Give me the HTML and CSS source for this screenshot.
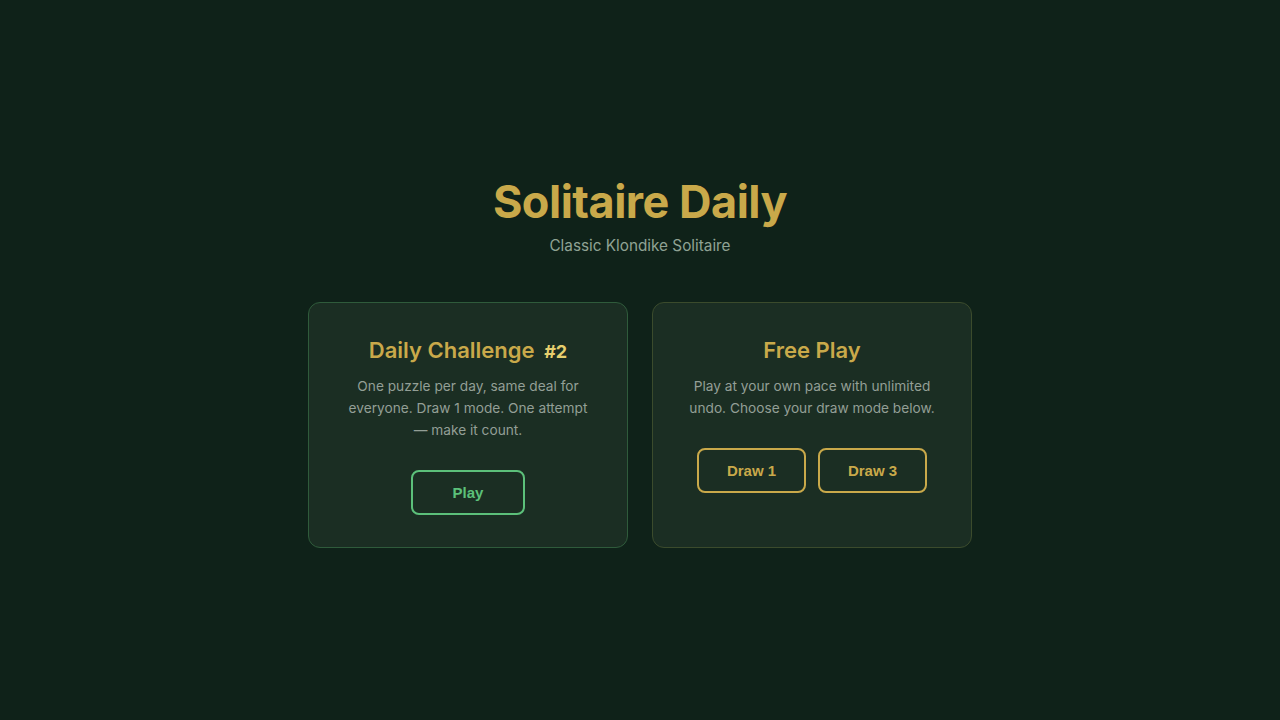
FILE: index.html
```html
<!DOCTYPE html>
<html>
<head>
    <meta charset="utf-8">
    <title>Solitaire Daily</title>
    <link rel="stylesheet" href="styles.css">
</head>
<body>
<main class="menu">
    <header class="title-block">
        <h1 class="title">Solitaire Daily</h1>
        <p class="subtitle">Classic Klondike Solitaire</p>
    </header>

    <section class="modes">
        <div class="card card-daily">
            <h2 class="card-title">Daily Challenge <span class="deal-no">#2</span></h2>
            <p class="card-text">One puzzle per day, same deal for everyone. Draw 1 mode. One attempt — make it count.</p>
            <div class="actions">
                <button class="btn btn-green btn-play">Play</button>
            </div>
        </div>

        <div class="card card-free">
            <h2 class="card-title">Free Play</h2>
            <p class="card-text">Play at your own pace with unlimited undo. Choose your draw mode below.</p>
            <div class="actions">
                <button class="btn btn-gold">Draw 1</button>
                <button class="btn btn-gold">Draw 3</button>
            </div>
        </div>
    </section>
</main>
</body>
</html>
```

FILE: styles.css
```css
* {
    box-sizing: border-box;
}

html, body {
    height: 100%;
}

body {
    margin: 0;
    background-color: #0f2219;
    font-family: Inter, "Noto Sans", sans-serif;
}

.menu {
    height: 100%;
    display: flex;
    flex-direction: column;
    align-items: center;
    padding-top: 174px;
}

.title-block {
    text-align: center;
}

.title {
    margin: 0;
    font-size: 45px;
    line-height: 56px;
    font-weight: 700;
    letter-spacing: -0.5px;
    color: #c9a94a;
}

.subtitle {
    margin: 6px 0 0;
    font-size: 15.3px;
    line-height: 20px;
    color: #8fa294;
}

.modes {
    display: grid;
    grid-template-columns: 320px 320px;
    gap: 24px;
    margin-top: 46px;
}

.card {
    background-color: #1b2e23;
    border: 1px solid #2f5b3b;
    border-radius: 12px;
    padding: 32px;
    text-align: center;
}

.card-free {
    border-color: #3b4b2c;
}

.card-title {
    margin: 0;
    font-size: 22px;
    line-height: 30px;
    font-weight: 600;
    color: #c9a94a;
}

.deal-no {
    margin-left: 4px;
    font-size: 18px;
    line-height: 1;
    font-weight: 700;
    color: #e6cf6e;
}

.card-text {
    margin: 10px 0 0;
    font-size: 13.7px;
    line-height: 22px;
    color: #939f96;
}

.actions {
    display: flex;
    justify-content: center;
    gap: 12px;
    margin-top: 29px;
}

.btn {
    height: 45px;
    border-radius: 8px;
    background: transparent;
    font-family: "Liberation Sans", Arial, sans-serif;
    font-size: 15px;
    font-weight: 700;
    cursor: pointer;
}

.btn-green {
    width: 114px;
    border: 2px solid #5cc07a;
    color: #5cc07a;
}

.btn-gold {
    width: 109px;
    border: 2px solid #c9a94a;
    color: #c9a94a;
}
```
